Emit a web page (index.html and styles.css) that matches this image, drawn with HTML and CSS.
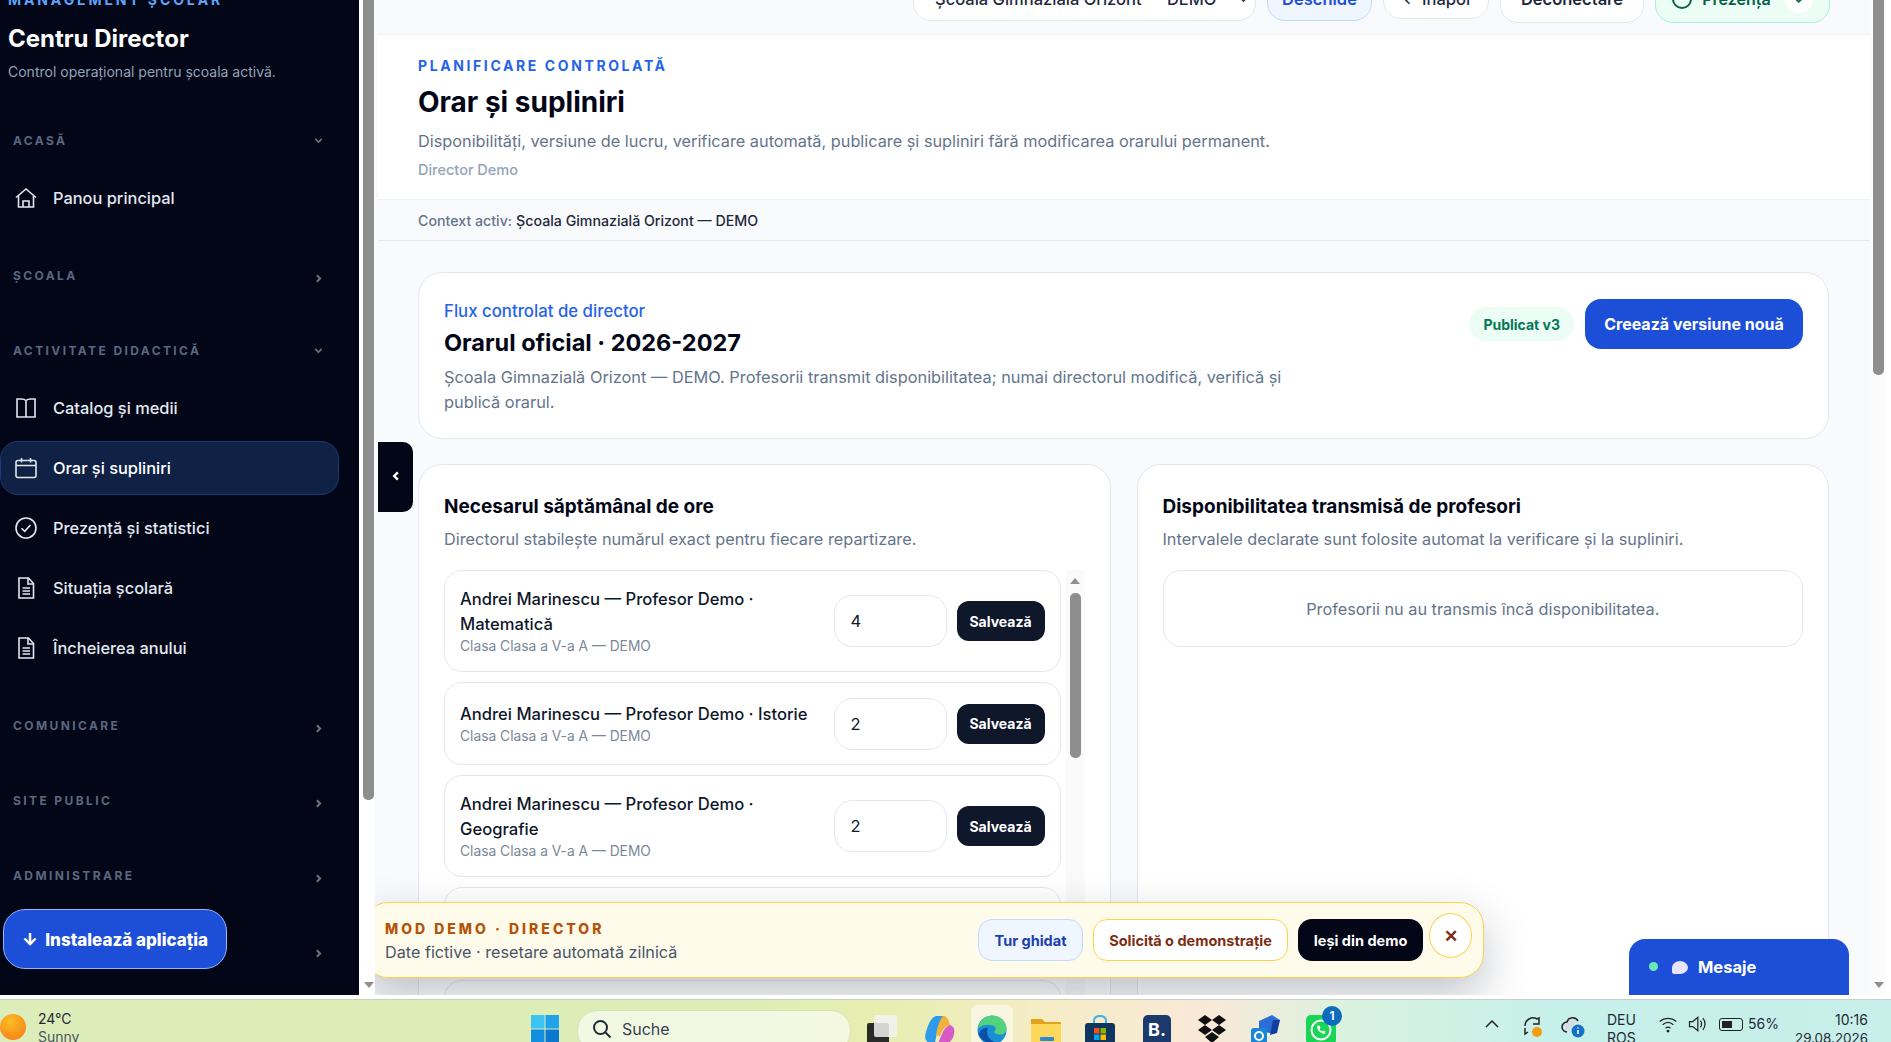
FILE: index.html
```html
<!doctype html>
<html lang="ro">
<head>
    <meta charset="UTF-8">
    <title>Orar și supliniri</title>
    <link rel="stylesheet" href="styles.css">
</head>
<body>
<div class="window">
    <aside class="sidebar">
        <div class="brand">
            <div class="brand-kicker">MANAGEMENT ȘCOLAR</div>
            <div class="brand-title">Centru Director</div>
            <div class="brand-sub">Control operațional pentru școala activă.</div>
        </div>
        <nav class="nav">
            <div class="nav-group">
                <div class="nav-head"><span>ACASĂ</span><svg class="chev" viewBox="0 0 10 10"><path d="M2 3.5l3 3 3-3"/></svg></div>
                <a class="nav-item">
                    <svg class="nav-icon" viewBox="0 0 24 24"><path d="M2 11.5L12 3l10 8.500"/><path d="M4.500 10v11h15V10"/><path d="M9 21v-6h6v6"/></svg>
                    Panou principal
                </a>
            </div>
            <div class="nav-group">
                <div class="nav-head"><span>ȘCOALA</span><svg class="chev chev-right" viewBox="0 0 10 10"><path d="M3.5 2l3 3-3 3"/></svg></div>
            </div>
            <div class="nav-group">
                <div class="nav-head"><span>ACTIVITATE DIDACTICĂ</span><svg class="chev" viewBox="0 0 10 10"><path d="M2 3.5l3 3 3-3"/></svg></div>
                <a class="nav-item">
                    <svg class="nav-icon" viewBox="0 0 24 24"><path d="M12 4.500V21.500M12 4.500C11 3.500 9.500 3 7 3H3v18h9M12 4.500C13 3.500 14.500 3 17 3h4v18h-9"/></svg>
                    Catalog și medii
                </a>
                <a class="nav-item active">
                    <svg class="nav-icon" viewBox="0 0 24 24"><rect x="2" y="4.500" width="20" height="17" rx="2"/><path d="M2 9.500h20M7.500 2v4.500M16.500 2v4.500"/></svg>
                    Orar și supliniri
                </a>
                <a class="nav-item">
                    <svg class="nav-icon" viewBox="0 0 24 24"><circle cx="12" cy="12" r="10"/><path d="M7.500 12.200l3.200 3.200 5.800-6.400"/></svg>
                    Prezență și statistici
                </a>
                <a class="nav-item">
                    <svg class="nav-icon" viewBox="0 0 24 24"><path d="M5 2h9.500l5 5.500V22H5z"/><path d="M14 2v6h5.500M8.500 12h7.500M8.500 15h7.500M8.500 18h7.500"/></svg>
                    Situația școlară
                </a>
                <a class="nav-item">
                    <svg class="nav-icon" viewBox="0 0 24 24"><path d="M5 2h9.500l5 5.500V22H5z"/><path d="M14 2v6h5.500M8.500 12h7.500M8.500 15h7.500M8.500 18h7.500"/></svg>
                    Încheierea anului
                </a>
            </div>
            <div class="nav-group">
                <div class="nav-head"><span>COMUNICARE</span><svg class="chev chev-right" viewBox="0 0 10 10"><path d="M3.5 2l3 3-3 3"/></svg></div>
            </div>
            <div class="nav-group">
                <div class="nav-head"><span>SITE PUBLIC</span><svg class="chev chev-right" viewBox="0 0 10 10"><path d="M3.5 2l3 3-3 3"/></svg></div>
            </div>
            <div class="nav-group">
                <div class="nav-head"><span>ADMINISTRARE</span><svg class="chev chev-right" viewBox="0 0 10 10"><path d="M3.5 2l3 3-3 3"/></svg></div>
            </div>
            <div class="nav-group">
                <div class="nav-head"><span></span><svg class="chev chev-right" viewBox="0 0 10 10"><path d="M3.5 2l3 3-3 3"/></svg></div>
            </div>
        </nav>
        <button class="install-btn">↓&nbsp; Instalează aplicația</button>
    </aside>

    <div class="scroll-track side-scroll">
        <div class="scroll-thumb side-thumb"></div>
        <div class="arrow-down"></div>
    </div>

    <main class="main">
        <button class="collapse-btn"><svg viewBox="0 0 10 10"><path d="M6.500 2L3.500 5l3 3"/></svg></button>

        <div class="topbar">
            <div class="top-actions">
                <div class="top-btn school-select"><span>Școala Gimnazială Orizont — DEMO</span><svg class="sel-chev" viewBox="0 0 10 10"><path d="M2 3.500l3 3 3-3"/></svg></div>
                <div class="top-btn open-btn">Deschide</div>
                <div class="top-btn back-btn">← Înapoi</div>
                <div class="top-btn logout-btn">Deconectare</div>
                <div class="top-btn presence-btn"><span class="presence-ring"></span>Prezență<span class="presence-knob">⌄</span></div>
            </div>
        </div>

        <header class="page-head">
            <div class="kicker">PLANIFICARE CONTROLATĂ</div>
            <h1 class="page-title">Orar și supliniri</h1>
            <p class="page-desc">Disponibilități, versiune de lucru, verificare automată, publicare și supliniri fără modificarea orarului permanent.</p>
            <div class="page-user">Director Demo</div>
        </header>
        <div class="context">Context activ: <span class="context-name">Școala Gimnazială Orizont — DEMO</span></div>

        <section class="content">
            <div class="card hero">
                <div class="hero-text">
                    <div class="hero-kicker">Flux controlat de director</div>
                    <h2 class="hero-title">Orarul oficial · 2026-2027</h2>
                    <p class="hero-desc">Școala Gimnazială Orizont — DEMO. Profesorii transmit disponibilitatea; numai directorul modifică, verifică și publică orarul.</p>
                </div>
                <div class="hero-actions">
                    <span class="badge">Publicat v3</span>
                    <button class="primary-btn">Creează versiune nouă</button>
                </div>
            </div>

            <div class="panels">
                <div class="card panel">
                    <h3 class="panel-title">Necesarul săptămânal de ore</h3>
                    <p class="panel-sub">Directorul stabilește numărul exact pentru fiecare repartizare.</p>
                    <div class="list-wrap">
                        <div class="list">
                            <div class="row">
                                <div class="row-text"><div class="row-name">Andrei Marinescu — Profesor Demo · Matematică</div><div class="row-class">Clasa Clasa a V-a A — DEMO</div></div>
                                <div class="num-input">4</div><button class="save-btn">Salvează</button>
                            </div>
                            <div class="row">
                                <div class="row-text"><div class="row-name">Andrei Marinescu — Profesor Demo · Istorie</div><div class="row-class">Clasa Clasa a V-a A — DEMO</div></div>
                                <div class="num-input">2</div><button class="save-btn">Salvează</button>
                            </div>
                            <div class="row">
                                <div class="row-text"><div class="row-name">Andrei Marinescu — Profesor Demo · Geografie</div><div class="row-class">Clasa Clasa a V-a A — DEMO</div></div>
                                <div class="num-input">2</div><button class="save-btn">Salvează</button>
                            </div>
                            <div class="row row-empty"></div>
                            <div class="row row-empty"></div>
                        </div>
                        <div class="scroll-track list-scroll">
                            <div class="arrow-up"></div>
                            <div class="scroll-thumb list-thumb"></div>
                        </div>
                    </div>
                </div>
                <div class="card panel">
                    <h3 class="panel-title">Disponibilitatea transmisă de profesori</h3>
                    <p class="panel-sub">Intervalele declarate sunt folosite automat la verificare și la supliniri.</p>
                    <div class="empty">Profesorii nu au transmis încă disponibilitatea.</div>
                </div>
            </div>
        </section>

        <div class="demo-banner">
            <div class="demo-text">
                <div class="demo-title">MOD DEMO · DIRECTOR</div>
                <div class="demo-sub">Date fictive · resetare automată zilnică</div>
            </div>
            <div class="demo-actions">
                <button class="demo-btn tour">Tur ghidat</button>
                <button class="demo-btn request">Solicită o demonstrație</button>
                <button class="demo-btn leave">Ieși din demo</button>
                <button class="demo-close">✕</button>
            </div>
        </div>

        <div class="messages"><span class="msg-dot"></span><span class="msg-bubble"></span>Mesaje</div>
    </main>

    <div class="scroll-track page-scroll">
        <div class="scroll-thumb page-thumb"></div>
        <div class="arrow-down"></div>
    </div>
</div>

<footer class="taskbar">
    <div class="weather">
        <span class="sun"></span>
        <div class="weather-text"><div>24°C</div><div class="weather-sub">Sunny</div></div>
    </div>
    <div class="apps">
        <svg class="app win" viewBox="0 0 28 28"><rect width="13.500" height="13.500" fill="#3cc4f5"/><rect x="14.500" width="13.500" height="13.500" fill="#1fa3ea"/><rect y="14.500" width="13.500" height="13.500" fill="#118ee0"/><rect x="14.500" y="14.500" width="13.500" height="13.500" fill="#0b78d0"/></svg>
        <div class="search">
            <svg viewBox="0 0 20 20"><circle cx="8.500" cy="8.500" r="6.500"/><path d="M13.500 13.500l5 5"/></svg>
            Suche
        </div>
        <svg class="app taskview" viewBox="0 0 30 30"><rect y="8" width="22" height="22" rx="2" fill="#2a2a2a"/><rect x="7" y="0" width="23" height="22" rx="2" fill="#f2f2f2" fill-opacity=".85"/></svg>
        <svg class="app copilot" viewBox="0 0 30 30"><path d="M11 1h7c-3 5-6 16-8 27H6C1 28-1 23 1 17 3 10 6 2 11 1z" fill="#2f9be8"/><path d="M18 1c3 0 5 2 6 6l1 3c-5 1-8 6-10 11l-4-1c1-7 3-14 7-19z" fill="#f3b03a"/><path d="M25 10c4 1 5 5 4 9-1 6-5 10-11 10h-6c2-2 3-5 4-8 2-5 5-10 9-11z" fill="#d65bc7"/></svg>
        <div class="edge-tile">
            <svg class="edge" viewBox="0 0 30 30"><circle cx="15" cy="15" r="14.500" fill="#1a8fd6"/><path d="M1 14C2 6 8 .5 15.500.5 23 .5 29.500 6 29.500 14c0 3.500-3 5.500-7 5.500-3 0-5.500-1-5.500-3 2-1 2.500-4 0-5.500C11 8.500 4 10 1 14z" fill="#52d27c"/><path d="M11 13c-2.500 5.500.5 12 7 14-7 2.500-14-1.500-16.500-8 2-4 6-7.500 9.500-6z" fill="#0c4fa8"/></svg>
        </div>
        <svg class="app folder" viewBox="0 0 30 30"><path d="M0 4h11l3 3h16v23H0z" fill="#e2a21b"/><rect y="9" width="30" height="21" fill="#fbd75b"/><rect x="9" y="22" width="14" height="4" rx="1" fill="#2b88d8"/></svg>
        <svg class="app store" viewBox="0 0 30 30"><path d="M9 8V5a6 4 0 0 1 12 0v3" fill="none" stroke="#39b3ea" stroke-width="2"/><rect y="8" width="30" height="22" rx="3" fill="#10355f"/><rect x="9" y="13" width="5.500" height="5.500" fill="#f25022"/><rect x="15.500" y="13" width="5.500" height="5.500" fill="#7fba00"/><rect x="9" y="19.500" width="5.500" height="5.500" fill="#00a4ef"/><rect x="15.500" y="19.500" width="5.500" height="5.500" fill="#ffb900"/></svg>
        <div class="booking">B.</div>
        <svg class="app dropbox" viewBox="0 0 30 30"><path d="M8 0l7 5-7 5-7-5zM22 0l7 5-7 5-7-5zM8 10l7 5-7 5-7-5zM22 10l7 5-7 5-7-5zM15 17l7 5-7 6-7-6z" fill="#111"/></svg>
        <svg class="app outlook" viewBox="0 0 30 30"><path d="M8 6L21 0l8 5-7 14-14-4z" fill="#2b6fd6"/><path d="M22 5h7l-3 13-7 2z" fill="#123f9c"/><rect y="13" width="16" height="16" rx="3" fill="#1a86d8"/><circle cx="8" cy="21" r="4" fill="none" stroke="#fff" stroke-width="2"/></svg>
        <div class="whatsapp">
            <svg viewBox="0 0 30 30"><rect width="30" height="30" rx="5" fill="#17d655"/><circle cx="15" cy="15" r="9.500" fill="none" stroke="#fff" stroke-width="2"/><path d="M11 11c0 4 3 7 7.500 8l1-2.500-2.500-1-1 1c-1-.5-2-1.500-2.500-2.500l1-1-1-2.500z" fill="#fff"/></svg>
            <span class="wa-badge">1</span>
        </div>
    </div>
    <div class="tray">
        <svg class="tray-icon caret" viewBox="0 0 16 16"><path d="M2 11l6-6 6 6"/></svg>
        <svg class="tray-icon sync" viewBox="0 0 24 24"><path d="M5 12a8 8 0 0 1 12-7l2-1v6h-6"/><path d="M5 14v6l3-2"/><circle cx="17" cy="18" r="5" fill="#f39c12" stroke="none"/></svg>
        <svg class="tray-icon cloud" viewBox="0 0 24 24"><path d="M6 18a5 5 0 0 1 0-10 6 6 0 0 1 11-1" fill="#d5dee0"/><circle cx="17" cy="17" r="6.500" fill="#1671c5" stroke="none"/><path d="M17 16v4M17 13.500v1" stroke="#fff"/></svg>
        <div class="lang"><div>DEU</div><div>ROS</div></div>
        <svg class="tray-icon wifi" viewBox="0 0 24 24"><path d="M2 9c6-5 14-5 20 0M5.500 13c4-3.500 9-3.500 13 0M9 17c2-1.500 4-1.500 6 0"/><circle cx="12" cy="20.500" r="1" fill="#222"/></svg>
        <svg class="tray-icon speaker" viewBox="0 0 24 24"><path d="M3 9v6h4l6 5V4L7 9z"/><path d="M16 8c2 2 2 6 0 8M19 5c3.500 4 3.500 10 0 14"/></svg>
        <div class="battery"><span class="battery-fill"></span></div>
        <span class="battery-pct">56%</span>
        <div class="clock"><div>10:16</div><div class="clock-date">29.08.2026</div></div>
    </div>
</footer>
</body>
</html>
```

FILE: styles.css
```css
* {
    box-sizing: border-box;
}
body {
    margin: 0;
    height: 1042px;
    overflow: hidden;
    background: #fff;
    font-family: 'Inter', 'Noto Sans', sans-serif;
    color: #0f172a;
}
button {
    font-family: inherit;
    cursor: pointer;
}
h1, h2, h3, p {
    margin: 0;
}

/* browser window */
.window {
    display: flex;
    width: 1886px;
    height: 995px;
    overflow: hidden;
    border-bottom-right-radius: 8px;
}

/* sidebar */
.sidebar {
    position: relative;
    width: 359px;
    flex-shrink: 0;
    height: 995px;
    overflow: hidden;
    background: #020617;
    padding-right: 20px;
}
.brand {
    height: 121px;
    padding-left: 8px;
    margin-top: -9px;
}
.brand-kicker {
    font-size: 14px;
    font-weight: 700;
    letter-spacing: 2.9px;
    color: #60a5fa;
    line-height: 18px;
}
.brand-title {
    margin-top: 13px;
    font-size: 24px;
    font-weight: 700;
    line-height: 34px;
    color: #fff;
}
.brand-sub {
    margin-top: 6px;
    font-size: 14px;
    line-height: 20px;
    color: #94a3b8;
}
.nav {
    display: flex;
    flex-direction: column;
    gap: 30px;
    padding-top: 6px;
}
.nav-group {
    display: flex;
    flex-direction: column;
    gap: 6px;
}
.nav-group:has(.nav-item) {
    margin-bottom: -2px;
}
.nav-head {
    display: flex;
    align-items: center;
    justify-content: space-between;
    height: 45px;
    padding: 0 15px 0 13px;
    font-size: 12px;
    font-weight: 700;
    letter-spacing: 2.4px;
    color: #5b6780;
}
.nav-head:not(:last-child) {
    margin-bottom: 2px;
}
.chev {
    width: 11px;
    height: 11px;
    fill: none;
    stroke: #64748b;
    stroke-width: 1.4;
}
.chev-right {
    margin-top: 5px;
    stroke-width: 1.8;
}
.nav-item {
    display: flex;
    align-items: center;
    gap: 15px;
    height: 54px;
    padding-left: 13px;
    border: 1px solid transparent;
    border-radius: 18px;
    font-size: 16.4px;
    font-weight: 500;
    color: #e2e8f0;
}
.nav-item.active {
    background: #0f2145;
    border-color: #1e3a6e;
    color: #fff;
}
.nav-icon {
    width: 24px;
    height: 24px;
    flex-shrink: 0;
    fill: none;
    stroke: #e2e8f0;
    stroke-width: 1.6;
}
.install-btn {
    position: absolute;
    left: 3px;
    top: 909px;
    width: 224px;
    height: 60px;
    padding-top: 3px;
    background: #1d4ed8;
    border: 1px solid #93b4f5;
    border-radius: 22px;
    color: #fff;
    font-size: 17px;
    font-weight: 800;
}

/* fake scrollbars */
.scroll-track {
    display: flex;
    flex-direction: column;
    justify-content: space-between;
    align-items: center;
    flex-shrink: 0;
}
.side-scroll {
    width: 16px;
    background: #fff;
    padding: 0 1px 7px 4px;
}
.page-scroll {
    width: 16px;
    background: #fbfbfb;
    padding: 0 2px 7px 3px;
}
.scroll-thumb {
    width: 11px;
    background: #8e8e8e;
    border-radius: 0 0 5px 5px;
}
.side-thumb {
    height: 800px;
}
.page-thumb {
    height: 375px;
}
.arrow-down {
    width: 0;
    height: 0;
    border-left: 5px solid transparent;
    border-right: 5px solid transparent;
    border-top: 6px solid #8e8e8e;
}
.arrow-up {
    width: 0;
    height: 0;
    border-left: 5px solid transparent;
    border-right: 5px solid transparent;
    border-bottom: 6px solid #8e8e8e;
}

/* main column */
.main {
    position: relative;
    flex: 1;
    min-width: 0;
    height: 995px;
    overflow: hidden;
    background: #f8fafc;
}
.collapse-btn {
    position: absolute;
    left: 3px;
    top: 442px;
    width: 35px;
    height: 70px;
    background: #020617;
    border: 0;
    border-radius: 0 10px 10px 0;
    z-index: 3;
}
.collapse-btn svg {
    width: 12px;
    height: 12px;
    fill: none;
    stroke: #fff;
    stroke-width: 2;
}
.topbar {
    height: 35px;
    margin-left: 3px;
    display: flex;
    justify-content: flex-end;
    align-items: flex-end;
    border-bottom: 1px solid #eef2f7;
    padding-right: 40px;
}
.top-actions {
    display: flex;
    align-items: center;
    gap: 11px;
    height: 50px;
    flex-shrink: 0;
    margin-bottom: 11px;
}
.top-btn {
    display: flex;
    align-items: center;
    justify-content: center;
    padding-top: 2px;
    background: #fff;
    border: 1px solid #e2e8f0;
    border-radius: 18px;
    font-size: 16.5px;
    font-weight: 600;
    color: #1e293b;
}
.school-select {
    width: 343px;
    height: 46px;
    justify-content: space-between;
    padding: 2px 6px 0 21px;
    font-weight: 500;
}
.sel-chev {
    width: 11px;
    height: 11px;
    fill: none;
    stroke: #334155;
    stroke-width: 1.4;
}
.open-btn {
    width: 105px;
    height: 46px;
    background: #eff6ff;
    border-color: #bfdbfe;
    color: #1d4ed8;
}
.back-btn {
    width: 106px;
    height: 42px;
    font-weight: 500;
}
.logout-btn {
    width: 144px;
    height: 50px;
}
.presence-btn {
    width: 175px;
    height: 50px;
    gap: 10px;
    background: #ecfdf5;
    border-color: #a7f3d0;
    color: #065f46;
    font-size: 16px;
}
.presence-ring {
    width: 20px;
    height: 20px;
    border: 2px solid #065f46;
    border-radius: 50%;
}
.presence-knob {
    width: 28px;
    height: 28px;
    margin-left: 4px;
    background: #fff;
    border-radius: 50%;
    text-align: center;
    line-height: 24px;
}
.page-head {
    height: 165px;
    margin-left: 3px;
    background: #fff;
    border-bottom: 1px solid #eef2f7;
    padding: 21px 40px 0;
}
.kicker {
    font-size: 14px;
    font-weight: 700;
    letter-spacing: 2.6px;
    line-height: 20px;
    color: #2563eb;
}
.page-title {
    margin-top: 8px;
    font-size: 28px;
    font-weight: 700;
    line-height: 36px;
    color: #020617;
}
.page-desc {
    margin-top: 9px;
    font-size: 16.3px;
    line-height: 24px;
    color: #64748b;
}
.page-user {
    margin-top: 7px;
    font-size: 14.5px;
    font-weight: 500;
    line-height: 20px;
    color: #94a3b8;
}
.context {
    height: 41px;
    margin-left: 3px;
    border-bottom: 1px solid #e2e8f0;
    padding: 0 40px;
    display: flex;
    align-items: center;
    gap: 4px;
    font-size: 14.2px;
    font-weight: 500;
    color: #64748b;
}
.context-name {
    color: #1e293b;
}
.content {
    padding: 31px 41px 0 43px;
}
.card {
    background: #fff;
    border: 1px solid #e2e8f0;
    border-radius: 24px;
}
.hero {
    display: flex;
    justify-content: space-between;
    align-items: flex-start;
    height: 167px;
    padding: 26px 25px 0;
}
.hero-text {
    width: 860px;
}
.hero-kicker {
    margin-bottom: 2px;
    font-size: 16.8px;
    font-weight: 500;
    line-height: 24px;
    color: #2563eb;
}
.hero-title {
    font-size: 23.5px;
    font-weight: 700;
    line-height: 36px;
    color: #020617;
}
.hero-desc {
    margin-top: 4px;
    font-size: 16.35px;
    line-height: 25px;
    color: #64748b;
}
.hero-actions {
    display: flex;
    align-items: center;
    gap: 11px;
}
.badge {
    height: 34px;
    padding: 0 14px;
    display: flex;
    align-items: center;
    background: #ecfdf5;
    border-radius: 17px;
    font-size: 14px;
    font-weight: 700;
    color: #047857;
}
.primary-btn {
    width: 218px;
    height: 50px;
    background: #1d4ed8;
    border: 0;
    border-radius: 16px;
    font-size: 16px;
    font-weight: 700;
    color: #fff;
}
.panels {
    display: grid;
    grid-template-columns: 1fr 1fr;
    gap: 26px;
    margin-top: 25px;
}
.panel {
    height: 700px;
    padding: 26px 25px;
}
.panel-title {
    font-size: 19px;
    font-weight: 700;
    line-height: 32px;
    color: #020617;
}
.panel-sub {
    margin-top: 3px;
    font-size: 16.3px;
    line-height: 26px;
    color: #64748b;
}
.list-wrap {
    display: flex;
    gap: 5px;
    margin-top: 18px;
}
.list {
    flex: 1;
    min-width: 0;
    display: flex;
    flex-direction: column;
    gap: 10px;
}
.list-scroll {
    width: 19px;
    background: #fafafa;
    justify-content: flex-start;
    gap: 9px;
    padding-top: 8px;
}
.list-thumb {
    height: 165px;
    border-radius: 5px;
}
.row {
    display: flex;
    align-items: center;
    gap: 10px;
    min-height: 83px;
    padding: 0 15px;
    background: #fff;
    border: 1px solid #e2e8f0;
    border-radius: 18px;
}
.row-text {
    flex: 1;
    min-width: 0;
    padding: 16px 0;
}
.row-name {
    font-size: 16.6px;
    font-weight: 500;
    line-height: 25px;
    color: #0f172a;
}
.row-class {
    font-size: 13.8px;
    line-height: 18px;
    color: #7c8798;
}
.num-input {
    width: 113px;
    height: 52px;
    flex-shrink: 0;
    display: flex;
    align-items: center;
    padding-left: 16px;
    margin-left: 13px;
    border: 1px solid #e2e8f0;
    border-radius: 18px;
    font-size: 16.5px;
    color: #0f172a;
}
.save-btn {
    width: 88px;
    height: 40px;
    flex-shrink: 0;
    background: #0f172a;
    border: 0;
    border-radius: 12px;
    font-size: 14px;
    font-weight: 700;
    color: #fff;
}
.empty {
    display: flex;
    align-items: center;
    justify-content: center;
    height: 77px;
    margin-top: 18px;
    border: 1px solid #e2e8f0;
    border-radius: 18px;
    font-size: 16.3px;
    color: #64748b;
}

/* floating bits over the page */
.demo-banner {
    position: absolute;
    left: -11px;
    top: 902px;
    width: 1120px;
    height: 76px;
    display: flex;
    align-items: center;
    justify-content: space-between;
    padding: 0 11px 0 20px;
    background: #fffbeb;
    border: 1px solid #fcd34d;
    border-radius: 24px;
    box-shadow: 0 18px 45px rgba(15, 23, 42, 0.25);
    z-index: 4;
}
.demo-text {
    padding-top: 2px;
}
.demo-title {
    font-size: 14px;
    font-weight: 800;
    letter-spacing: 3px;
    line-height: 20px;
    color: #b45309;
}
.demo-sub {
    margin-top: 2px;
    font-size: 16.2px;
    line-height: 22px;
    color: #475569;
}
.demo-actions {
    display: flex;
    align-items: center;
    gap: 10px;
}
.demo-btn {
    height: 42px;
    border-radius: 14px;
    font-size: 14.5px;
    font-weight: 700;
}
.tour {
    width: 105px;
    background: #eff6ff;
    border: 1px solid #bfdbfe;
    color: #1e40af;
}
.request {
    width: 195px;
    background: #fff;
    border: 1px solid #fcd34d;
    color: #7c2d12;
}
.leave {
    width: 125px;
    background: #020617;
    border: 0;
    color: #fff;
}
.demo-close {
    width: 43px;
    height: 45px;
    margin: -9px 0 0 -4px;
    background: #fff;
    border: 1px solid #fcd34d;
    border-radius: 50%;
    font-size: 17px;
    font-weight: 800;
    color: #7c2d12;
}
.messages {
    position: absolute;
    left: 1254px;
    top: 939px;
    width: 220px;
    height: 70px;
    display: flex;
    align-items: flex-start;
    padding: 18px 0 0 20px;
    background: #1d4ed8;
    border-radius: 16px 16px 0 0;
    font-size: 16.5px;
    font-weight: 700;
    line-height: 20px;
    color: #fff;
    z-index: 4;
}
.msg-dot {
    width: 9px;
    height: 9px;
    margin: 5px 14px 0 0;
    background: #6ee7b7;
    border-radius: 50%;
}
.msg-bubble {
    width: 16px;
    height: 13px;
    margin: 4px 10px 0 0;
    background: #e9e3fb;
    border-radius: 50% 50% 50% 20%;
}

/* windows taskbar */
.taskbar {
    display: flex;
    align-items: flex-start;
    height: 43px;
    margin-top: 4px;
    border-top: 1px solid #c9cfc4;
    overflow: hidden;
    background: linear-gradient(90deg, #dcedb9 0, #dcedb7 38%, #e6eeaf 46%, #f6ecc8 56%, #f8e9d8 64%, #d8f2e0 72%, #c6f0ea 82%, #c8efe9 100%);
    color: #1f2937;
}
.weather {
    width: 531px;
    flex-shrink: 0;
    display: flex;
    gap: 12px;
    padding-top: 10px;
}
.sun {
    width: 26px;
    height: 26px;
    margin-top: 4px;
    background: radial-gradient(circle at 40% 30%, #fbbf24, #f97316);
    border-radius: 50%;
}
.weather-text {
    font-size: 14px;
    line-height: 18px;
}
.weather-sub {
    color: #4b5563;
}
.apps {
    display: flex;
    align-items: flex-start;
    width: 806px;
    flex-shrink: 0;
    padding-top: 15px;
}
.app {
    width: 30px;
    height: 30px;
    flex-shrink: 0;
}
.win {
    width: 28px;
    height: 28px;
}
.search {
    display: flex;
    align-items: center;
    gap: 10px;
    width: 274px;
    height: 42px;
    margin: -5px 0 0 18px;
    padding: 0 0 4px 14px;
    background: rgba(255, 255, 255, 0.6);
    border: 1px solid #d4e4b8;
    border-radius: 20px;
    font-size: 16px;
    color: #374151;
}
.search svg {
    width: 20px;
    height: 20px;
    fill: none;
    stroke: #1f2937;
    stroke-width: 2;
}
.taskview {
    margin-left: 16px;
}
.copilot {
    margin-left: 28px;
}
.edge-tile {
    width: 42px;
    height: 44px;
    margin: -10px 0 0 16px;
    padding: 10px 6px 0;
    background: rgba(255, 255, 255, 0.5);
    border-radius: 6px 6px 0 0;
}
.edge {
    display: block;
    width: 30px;
    height: 30px;
}
.folder {
    margin-left: 18px;
}
.store {
    margin-left: 24px;
}
.booking {
    width: 28px;
    height: 34px;
    margin-left: 28px;
    flex-shrink: 0;
    background: #1b3a6b;
    border-radius: 5px;
    font-size: 18px;
    font-weight: 700;
    line-height: 30px;
    text-align: center;
    color: #fff;
}
.dropbox {
    margin-left: 26px;
}
.outlook {
    margin-left: 24px;
}
.whatsapp {
    position: relative;
    width: 30px;
    height: 30px;
    margin-left: 25px;
    flex-shrink: 0;
}
.whatsapp svg {
    display: block;
    width: 30px;
    height: 30px;
}
.wa-badge {
    position: absolute;
    right: -6px;
    top: -9px;
    width: 20px;
    height: 20px;
    background: #0f6cbd;
    border-radius: 50%;
    font-size: 12px;
    font-weight: 600;
    line-height: 20px;
    text-align: center;
    color: #fff;
}
.tray {
    flex: 1;
    display: flex;
    align-items: flex-start;
    padding: 0 23px 0 147px;
    font-size: 14px;
    line-height: 18px;
    color: #1f2937;
}
.tray-icon {
    width: 20px;
    height: 20px;
    flex-shrink: 0;
    margin-top: 14px;
    fill: none;
    stroke: #222;
    stroke-width: 1.5;
}
.caret {
    width: 16px;
    height: 16px;
    margin-top: 16px;
}
.sync {
    width: 24px;
    height: 24px;
    margin-left: 20px;
}
.cloud {
    width: 24px;
    height: 24px;
    margin-left: 17px;
}
.lang {
    margin: 11px 0 0 22px;
}
.wifi {
    margin-left: 22px;
}
.speaker {
    margin-left: 9px;
}
.battery {
    width: 24px;
    height: 13px;
    margin: 18px 0 0 12px;
    padding: 2px;
    border: 1px solid #222;
    border-radius: 3px;
    flex-shrink: 0;
}
.battery-fill {
    display: block;
    width: 55%;
    height: 100%;
    background: #222;
}
.battery-pct {
    margin: 15px 0 0 5px;
}
.clock {
    margin: 11px 0 0 auto;
    text-align: right;
}
.clock-date {
    font-size: 13.4px;
}
```
